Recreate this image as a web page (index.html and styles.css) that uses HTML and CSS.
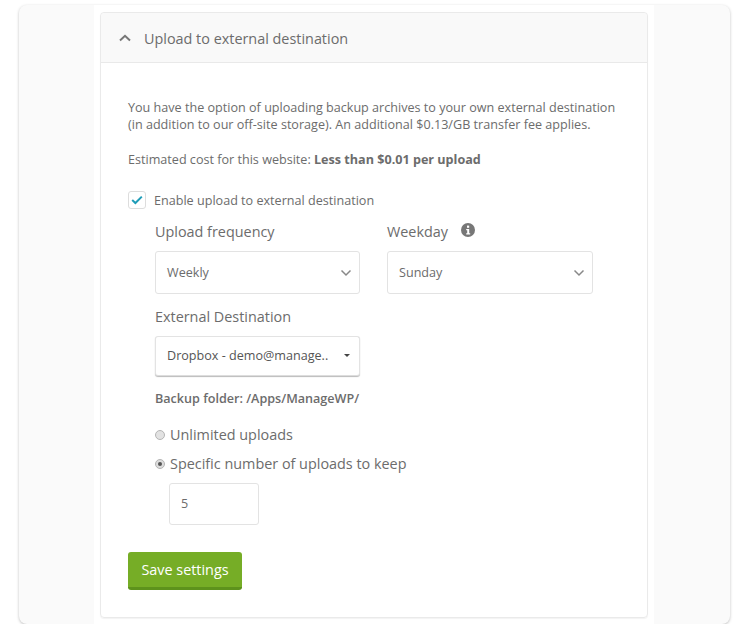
FILE: index.html
```html
<!DOCTYPE html>
<html lang="en">
<head>
    <meta charset="UTF-8">
    <title>Upload to external destination</title>
    <link rel="stylesheet" href="styles.css">
</head>
<body>
    <div class="outer">
        <div class="inner">
            <div class="panel">
                <div class="panel-header">
                    <svg class="chevron" width="14" height="10" viewBox="0 0 14 10"><path d="M2 7.5 L7 2.8 L12 7.5" fill="none" stroke="#777" stroke-width="2"/></svg>
                    <span>Upload to external destination</span>
                </div>
                <div class="panel-body">
                    <p class="intro">You have the option of uploading backup archives to your own external destination<br>(in addition to our off-site storage). An additional $0.13/GB transfer fee applies.</p>
                    <p class="cost">Estimated cost for this website: <b>Less than $0.01 per upload</b></p>
                    <div class="enable">
                        <span class="checkbox">
                            <svg width="12" height="10" viewBox="0 0 12 10"><path d="M1.2 5 L4.4 8 L10.8 1.6" fill="none" stroke="#1f9db8" stroke-width="2"/></svg>
                        </span>
                        <span>Enable upload to external destination</span>
                    </div>
                    <div class="settings">
                        <div class="row">
                            <div class="field">
                                <div class="field-label">Upload frequency</div>
                                <div class="select">
                                    <span>Weekly</span>
                                    <svg width="12" height="8" viewBox="0 0 12 8"><path d="M1.5 1.5 L6 6 L10.5 1.5" fill="none" stroke="#888" stroke-width="1.5"/></svg>
                                </div>
                            </div>
                            <div class="field">
                                <div class="field-label">Weekday
                                    <svg class="info" width="14" height="14" viewBox="0 0 14 14"><circle cx="7" cy="7" r="7" fill="#777"/><rect x="6" y="2.6" width="2.2" height="2.2" fill="#fff"/><path d="M5.2 6h3v4.2h1v1.2H5.2v-1.2h1V7.2h-1z" fill="#fff"/></svg>
                                </div>
                                <div class="select">
                                    <span>Sunday</span>
                                    <svg width="12" height="8" viewBox="0 0 12 8"><path d="M1.5 1.5 L6 6 L10.5 1.5" fill="none" stroke="#888" stroke-width="1.5"/></svg>
                                </div>
                            </div>
                        </div>
                        <div class="field dest">
                            <div class="field-label">External Destination</div>
                            <div class="select select-dest">
                                <span>Dropbox - demo@manage..</span>
                                <i class="caret"></i>
                            </div>
                        </div>
                        <div class="folder">Backup folder: /Apps/ManageWP/</div>
                        <div class="radio-row"><span class="radio"></span>Unlimited uploads</div>
                        <div class="radio-row second"><span class="radio checked"></span>Specific number of uploads to keep</div>
                        <div class="number-input">5</div>
                    </div>
                    <button class="btn-save">Save settings</button>
                </div>
            </div>
        </div>
    </div>
</body>
</html>
```

FILE: styles.css
```css
* { margin: 0; padding: 0; box-sizing: border-box; }
body { font-family: "Open Sans", sans-serif; background: #fff; color: #6c6c6c; padding-top: 5px; overflow: hidden; }
.outer { width: 711px; height: 619px; margin-left: 19px; background: #fafafa; border-radius: 8px; box-shadow: 0 1px 3px rgba(0,0,0,0.25); }
.inner { width: 560px; height: 619px; margin-left: 75px; background: #fff; padding: 7px 6px 6px; }
.panel { height: 606px; border: 1px solid #eaeaea; border-radius: 4px; box-shadow: 0 1px 1px rgba(0,0,0,0.05); }
.panel-header { display: flex; align-items: center; height: 50px; background: #f9f9f9; border-bottom: 1px solid #e9e9e9; border-radius: 4px 4px 0 0; padding: 1px 0 0 17px; font-size: 14.4px; }
.chevron { margin-right: 12px; }
.panel-body { padding: 36px 27px 0; font-size: 12.6px; line-height: 17px; white-space: nowrap; }
.cost { margin-top: 18px; }
.cost b { font-weight: 700; }
.enable { display: flex; align-items: center; margin-top: 23px; font-size: 12.6px; }
.checkbox { display: flex; align-items: center; justify-content: center; width: 18px; height: 18px; border: 1px solid #ddd; border-radius: 3px; margin-right: 8px; }
.settings { padding-left: 27px; }
.row { display: flex; gap: 27px; margin-top: 13px; }
.field { width: 205px; }
.row .field:last-child { width: 206px; }
.field-label { font-size: 14.4px; line-height: 20px; }
.info { margin-left: 9px; }
.select { display: flex; align-items: center; justify-content: space-between; height: 43px; margin-top: 9px; padding: 0 7px 0 11px; border: 1px solid #e3e3e3; border-radius: 3px; background: #fff; font-size: 12.6px; }
.dest { margin-top: 13px; }
.select-dest { height: 40px; margin-top: 9px; padding: 0 9px 2px 11px; border-bottom: 1px solid #ddd; box-shadow: 0 1px 1px #bbb; color: #555; }
.caret { width: 0; height: 0; border: 3px solid transparent; border-top-color: #444; border-bottom: 0; }
.folder { margin-top: 14px; font-size: 12.6px; font-weight: 600; }
.radio-row { display: flex; align-items: center; margin-top: 18px; font-size: 14.4px; line-height: 20px; }
.radio-row.second { margin-top: 9px; }
.radio { position: relative; width: 10px; height: 10px; margin-right: 5px; border: 1px solid #b5b5b5; border-radius: 50%; background: #e2e2e2; }
.radio.checked { background: #ddd; }
.radio.checked::after { content: ''; position: absolute; top: 2px; left: 2px; width: 4px; height: 4px; border-radius: 50%; background: #555; }
.number-input { width: 90px; height: 42px; margin: 9px 0 0 14px; padding-left: 11px; border: 1px solid #e3e3e3; border-radius: 3px; font-size: 12.6px; line-height: 40px; }
.btn-save { display: block; width: 114px; height: 38px; margin-top: 27px; border: none; border-bottom: 3px solid #5d921c; border-radius: 3px; background: #76ad26; color: #fff; font-family: inherit; font-size: 14.4px; }
```
